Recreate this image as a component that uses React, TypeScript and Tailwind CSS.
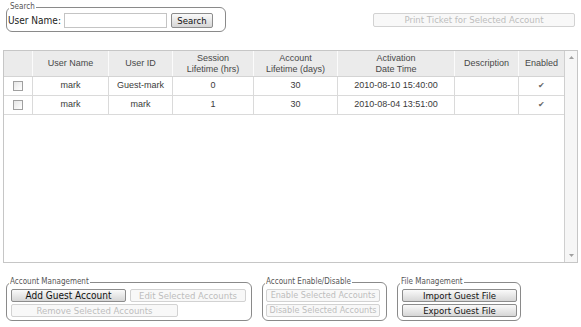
import React from 'react';

const cols = [
  { label: [''], w: 'w-[29px]' },
  { label: ['User Name'], w: 'w-[76px]' },
  { label: ['User ID'], w: 'w-[64px]' },
  { label: ['Session', 'Lifetime (hrs)'], w: 'w-[81px]' },
  { label: ['Account', 'Lifetime (days)'], w: 'w-[84px]' },
  { label: ['Activation', 'Date Time'], w: 'w-[117px]' },
  { label: ['Description'], w: 'w-[64px]' },
  { label: ['Enabled'], w: 'w-[45px]' },
];

const rows = [
  ['mark', 'Guest-mark', '0', '30', '2010-08-10 15:40:00', ''],
  ['mark', 'mark', '1', '30', '2010-08-04 13:51:00', ''],
];

const ui = "font-['DejaVu_Sans_Condensed','DejaVu_Sans',sans-serif]";

function Btn({ children, disabled, className = '' }: { children: React.ReactNode; disabled?: boolean; className?: string }) {
  return (
    <button
      className={
        `${ui} flex items-center justify-center overflow-hidden whitespace-nowrap rounded-[2px] border leading-none ` +
        (disabled
          ? 'border-[#d2d2d2] bg-[#f8f8f8] text-[#bdbdbd] '
          : 'border-[#8c8c8c] bg-gradient-to-b from-[#fafafa] to-[#d6d6d6] text-[#111] ') +
        className
      }
    >
      {children}
    </button>
  );
}

function Group({ title, className = '', children }: { title: string; className?: string; children: React.ReactNode }) {
  return (
    <fieldset className={`rounded-[6px] border border-[#8a8a8a] ${className}`}>
      <legend className={`${ui} ml-[2px] px-[1px] text-[8px] leading-[8px] text-[#555]`}>{title}</legend>
      {children}
    </fieldset>
  );
}

function Check() {
  return <div className="h-[10px] w-[10px] border border-[#a0a0a0] bg-gradient-to-br from-[#e6e6e6] to-white" />;
}

export default function App() {
  return (
    <div className="h-[327px] w-[581px] overflow-hidden bg-white">
      {/* top row */}
      <div className="flex items-start">
        <Group title="Search" className="ml-[6px] mt-[3px] h-[29px] w-[220px]">
          <div className="flex items-center pl-[1px] pt-[2px]">
            <span className={`${ui} w-[56px] text-[10px] text-[#222]`}>User Name:</span>
            <div className="h-[15px] w-[103px] border border-[#c4c4c4] bg-white" />
            <Btn className="ml-[4px] h-[15px] w-[42px] text-[9.5px]">Search</Btn>
          </div>
        </Group>
        <Btn disabled className="ml-auto mr-[6px] mt-[13px] h-[14px] w-[202px] text-[9.5px]">
          Print Ticket for Selected Account
        </Btn>
      </div>

      {/* grid */}
      <div className="ml-[3px] mt-[18px] flex h-[213px] w-[575px] border border-[#c6c6c6] font-['Liberation_Sans',Arial,sans-serif] text-[9px]">
        <div className="flex-1">
          <div className="flex h-[26px] border-b border-[#d4d4d4] bg-[#ebebeb] text-[#484848]">
            {cols.map((c, i) => (
              <div
                key={i}
                className={`${c.w} flex flex-col items-center justify-center leading-[11px] ${i < cols.length - 1 ? 'border-r border-[#fbfbfb]' : ''}`}
              >
                {c.label.map((l, j) => (
                  <span key={j}>{l}</span>
                ))}
              </div>
            ))}
          </div>
          {rows.map((r, ri) => (
            <div key={ri} className="flex h-[19px] border-b border-[#dadada] text-[#3a3a3a]">
              <div className="flex w-[29px] items-center justify-center border-r border-[#dadada]">
                <Check />
              </div>
              {r.map((v, ci) => (
                <div key={ci} className={`${cols[ci + 1].w} flex items-center justify-center border-r border-[#dadada]`}>
                  {v}
                </div>
              ))}
              <div className="flex w-[45px] items-center justify-center text-[8px] text-[#666]">✔</div>
            </div>
          ))}
        </div>
        <div className="flex w-[13px] flex-col items-center justify-between border-l border-[#cfcfcf] bg-[#f6f6f6] py-[5px]">
          <svg width="5" height="3" viewBox="0 0 5 3"><path d="M0 3 L2.5 0 L5 3 Z" fill="#a0a0a0" /></svg>
          <svg width="5" height="3" viewBox="0 0 5 3"><path d="M0 0 L2.5 3 L5 0 Z" fill="#a0a0a0" /></svg>
        </div>
      </div>

      {/* bottom groups */}
      <div className="ml-[6px] mt-[15px] flex gap-[10px]">
        <Group title="Account Management" className="h-[43px] w-[246px]">
          <div className="flex flex-col gap-[2px] pl-[4px] pt-[3px]">
            <div className="flex gap-[4px]">
              <Btn className="h-[13px] w-[115px] text-[10px]">Add Guest Account</Btn>
              <Btn disabled className="h-[13px] w-[116px] text-[9.5px]">Edit Selected Accounts</Btn>
            </div>
            <Btn disabled className="h-[13px] w-[167px] text-[9.5px]">Remove Selected Accounts</Btn>
          </div>
        </Group>
        <Group title="Account Enable/Disable" className="h-[43px] w-[125px]">
          <div className="flex flex-col gap-[2px] pl-[3px] pt-[3px]">
            <Btn disabled className="h-[13px] w-[114px] text-[9px]">Enable Selected Accounts</Btn>
            <Btn disabled className="h-[13px] w-[114px] text-[9px]">Disable Selected Accounts</Btn>
          </div>
        </Group>
        <Group title="File Management" className="h-[43px] w-[124px]">
          <div className="flex flex-col gap-[2px] pl-[4px] pt-[3px]">
            <Btn className="h-[13px] w-[115px] text-[9.5px]">Import Guest File</Btn>
            <Btn className="h-[13px] w-[115px] text-[9.5px]">Export Guest File</Btn>
          </div>
        </Group>
      </div>
    </div>
  );
}
